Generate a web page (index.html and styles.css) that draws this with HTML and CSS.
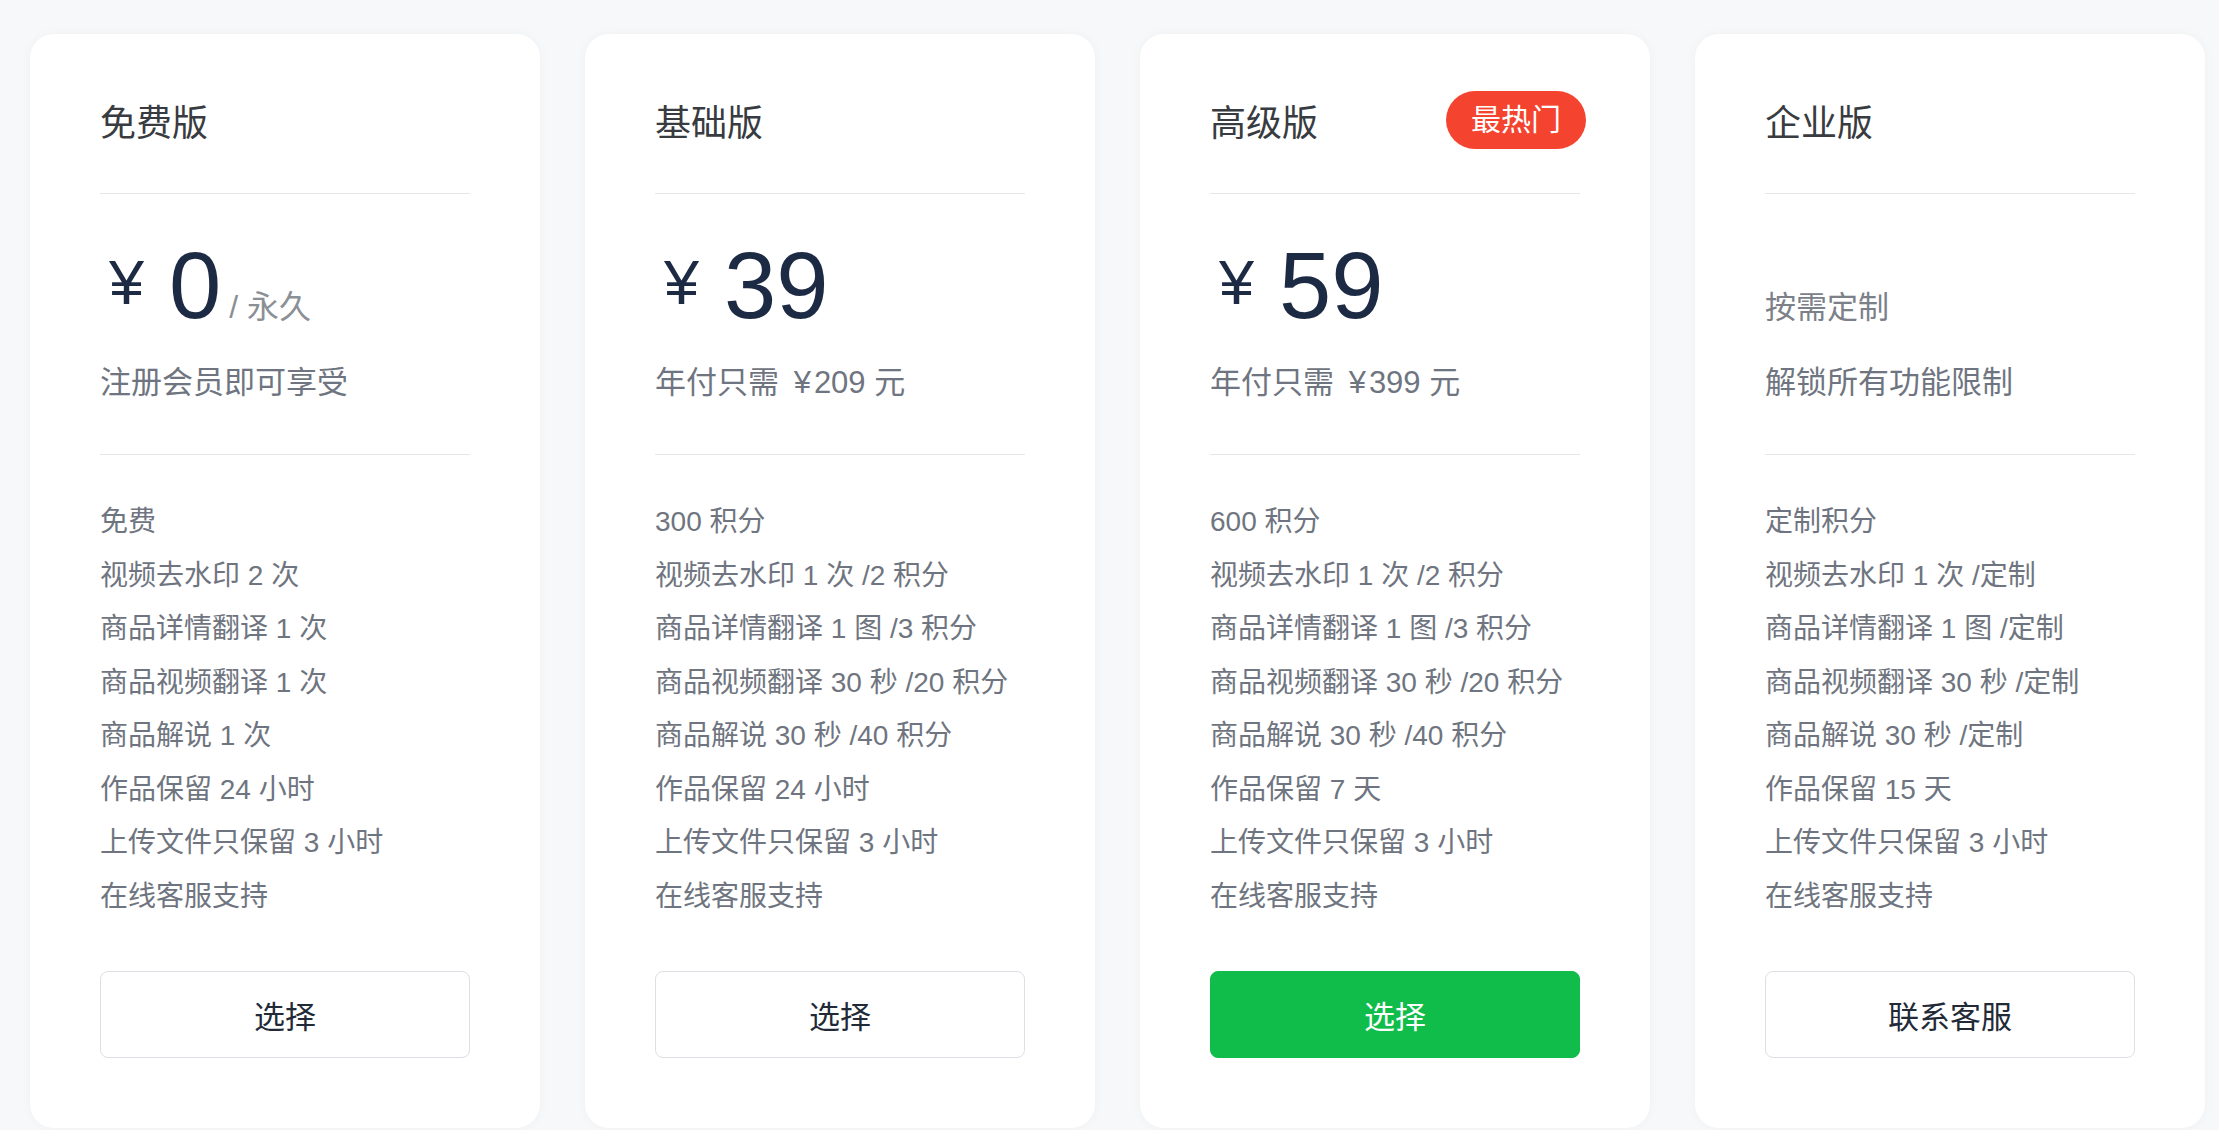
FILE: index.html
```html
<!DOCTYPE html>
<html lang="zh-CN">
<head>
<meta charset="utf-8">
<title>价格方案</title>
<link rel="stylesheet" href="styles.css">
</head>
<body>
<main class="plans">
  <section class="card">
    <h2 class="title">免费版</h2>
    <div class="rule"></div>
    <div class="price"><span class="yen">¥</span><span class="amount">0</span><span class="per">/ 永久</span></div>
    <p class="sub">注册会员即可享受</p>
    <div class="rule rule-2"></div>
    <ul class="features">
      <li>免费</li>
      <li>视频去水印 2 次</li>
      <li>商品详情翻译 1 次</li>
      <li>商品视频翻译 1 次</li>
      <li>商品解说 1 次</li>
      <li>作品保留 24 小时</li>
      <li>上传文件只保留 3 小时</li>
      <li>在线客服支持</li>
    </ul>
    <button class="btn">选择</button>
  </section>

  <section class="card">
    <h2 class="title">基础版</h2>
    <div class="rule"></div>
    <div class="price"><span class="yen">¥</span><span class="amount">39</span></div>
    <p class="sub">年付只需 <span class="sub-yen">¥</span>209 元</p>
    <div class="rule rule-2"></div>
    <ul class="features">
      <li>300 积分</li>
      <li>视频去水印 1 次 /2 积分</li>
      <li>商品详情翻译 1 图 /3 积分</li>
      <li>商品视频翻译 30 秒 /20 积分</li>
      <li>商品解说 30 秒 /40 积分</li>
      <li>作品保留 24 小时</li>
      <li>上传文件只保留 3 小时</li>
      <li>在线客服支持</li>
    </ul>
    <button class="btn">选择</button>
  </section>

  <section class="card">
    <h2 class="title">高级版</h2>
    <span class="badge">最热门</span>
    <div class="rule"></div>
    <div class="price"><span class="yen">¥</span><span class="amount">59</span></div>
    <p class="sub">年付只需 <span class="sub-yen">¥</span>399 元</p>
    <div class="rule rule-2"></div>
    <ul class="features">
      <li>600 积分</li>
      <li>视频去水印 1 次 /2 积分</li>
      <li>商品详情翻译 1 图 /3 积分</li>
      <li>商品视频翻译 30 秒 /20 积分</li>
      <li>商品解说 30 秒 /40 积分</li>
      <li>作品保留 7 天</li>
      <li>上传文件只保留 3 小时</li>
      <li>在线客服支持</li>
    </ul>
    <button class="btn btn-primary">选择</button>
  </section>

  <section class="card">
    <h2 class="title">企业版</h2>
    <div class="rule"></div>
    <div class="price"><span class="custom">按需定制</span></div>
    <p class="sub">解锁所有功能限制</p>
    <div class="rule rule-2"></div>
    <ul class="features">
      <li>定制积分</li>
      <li>视频去水印 1 次 /定制</li>
      <li>商品详情翻译 1 图 /定制</li>
      <li>商品视频翻译 30 秒 /定制</li>
      <li>商品解说 30 秒 /定制</li>
      <li>作品保留 15 天</li>
      <li>上传文件只保留 3 小时</li>
      <li>在线客服支持</li>
    </ul>
    <button class="btn">联系客服</button>
  </section>
</main>
</body>
</html>
```

FILE: styles.css
```css
* {
  box-sizing: border-box;
}

html, body {
  margin: 0;
  padding: 0;
  background: #f7f8fa;
}

body {
  font-family: "Liberation Sans", "Noto Sans CJK SC", sans-serif;
  color: #3a3a3a;
  height: 1130px;
  overflow: hidden;
}

.plans {
  display: grid;
  grid-template-columns: repeat(4, 510px);
  column-gap: 45px;
  padding: 34px 0 0 30px;
}

.card {
  position: relative;
  background: #ffffff;
  border-radius: 24px;
  box-shadow: 0 0 12px rgba(20, 30, 60, 0.035);
  padding: 66px 70px 70px;
  display: flex;
  flex-direction: column;
}

.title {
  margin: 0;
  font-size: 36px;
  line-height: 48px;
  font-weight: 400;
  color: #383b40;
}

.badge {
  position: absolute;
  top: 57px;
  right: 64px;
  height: 58px;
  padding: 0 25px;
  border-radius: 29px;
  background: #f4432f;
  color: #ffffff;
  font-size: 30px;
  line-height: 58px;
}

.rule {
  height: 1px;
  background: #e4e6ea;
  margin-top: 45px;
}

.price {
  margin-top: 43px;
  height: 96px;
  font-size: 96px;
  line-height: 96px;
  white-space: nowrap;
  color: #1d2a44;
}

.yen {
  display: inline-block;
  font-size: 63px;
  line-height: 1;
  vertical-align: 14px;
  margin-left: 9px;
  margin-right: 25px;
}

.amount {
  font-size: 94px;
  line-height: 1;
}

.per {
  font-size: 32px;
  line-height: 1;
  color: #8b8f96;
  margin-left: 8px;
}

.custom {
  font-size: 31px;
  line-height: 1;
  color: #7b8089;
}

.sub {
  margin: 28px 0 0;
  font-size: 31px;
  line-height: 44px;
  color: #6f7580;
}

.sub-yen {
  margin: 0 3px 0 6px;
}

.rule-2 {
  margin-top: 49px;
}

.features {
  list-style: none;
  margin: 40px 0 0;
  padding: 0;
  font-size: 28px;
  line-height: 53.5px;
  color: #6f7580;
}

.btn {
  margin-top: 48px;
  height: 87px;
  width: 100%;
  border: 1.5px solid #dcdfe4;
  border-radius: 8px;
  background: #ffffff;
  font-family: inherit;
  font-size: 31px;
  color: #222a38;
  cursor: pointer;
}

.btn-primary {
  background: #10bd4a;
  border-color: #10bd4a;
  color: #ffffff;
}
```
